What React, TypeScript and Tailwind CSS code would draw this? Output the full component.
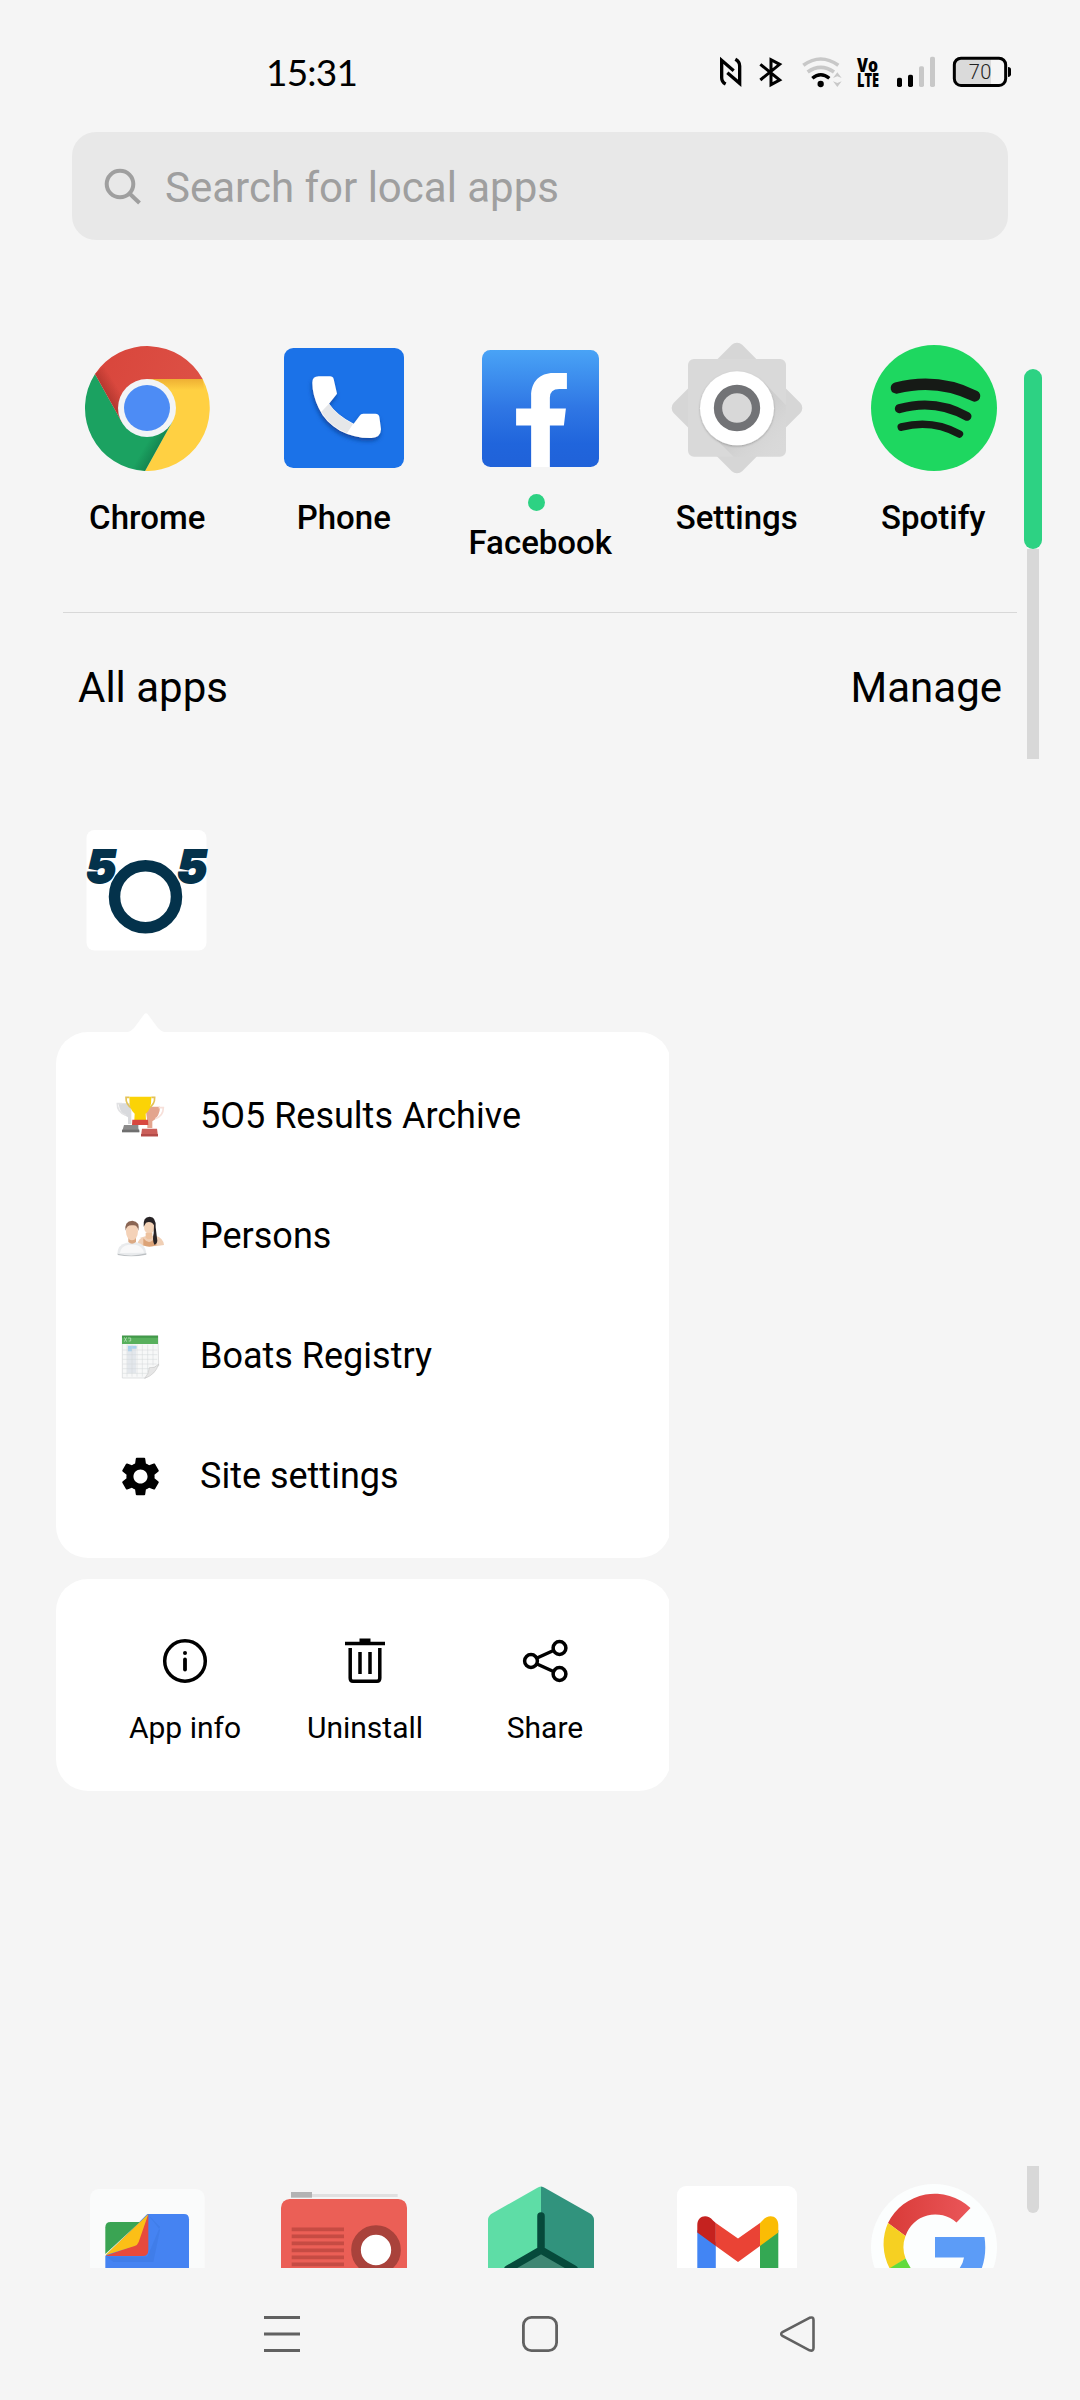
import React from "react";

type Kids = { children: React.ReactNode };

/* ---------- status bar ---------- */

function StatusBar() {
  return (
    <header className="flex h-[132px] shrink-0 items-start pt-[56px]">
      <div className="ml-[266px] h-[32px] w-[424px] font-['Lato'] text-[37px] leading-[32px] tracking-[-0.8px]">15:31</div>
      <svg className="ml-[28px] h-[32px] w-[26px]" viewBox="84 80 78 96" fill="none" stroke="#000" strokeWidth="10">
        <path d="M107 164 Q95 158 95 145 V93 L131 124" />
        <path d="M136 90 Q149 97 149 110 V162 L112 130" />
      </svg>
      <svg className="ml-[14px] h-[32px] w-[26px]" viewBox="202 78 78 96" fill="none" stroke="#000" strokeWidth="9">
        <path d="M209 103 L267 150 L241 164 V89 L267 103 L209 150" />
      </svg>
      <svg className="ml-[17px] h-[32px] w-[42px]" viewBox="331 78 126 96" fill="none">
        <path d="M338 106 Q390 68 443 106" stroke="#c8c8c8" strokeWidth="11" />
        <path d="M351 126 Q390 98 430 126" stroke="#c8c8c8" strokeWidth="11" />
        <path d="M365 145 Q390 123 416 145" stroke="#000" strokeWidth="10" />
        <circle cx="390" cy="162" r="9.500" fill="#000" />
        <path d="M427 144 L440 127 L453 144 L440 139Z M427 154 L440 171 L453 154 L440 159Z" fill="#c8c8c8" />
      </svg>
      <svg className="ml-[12px] h-[34px] w-[26px] overflow-visible" viewBox="0 0 26 34" fontFamily="Open Sans" fontWeight="800">
        <text x="2" y="15.600" fontSize="18.500" textLength="21" lengthAdjust="spacingAndGlyphs">Vo</text>
        <text x="2" y="31" fontSize="19.500" textLength="22" lengthAdjust="spacingAndGlyphs">LTE</text>
      </svg>
      <svg className="ml-[15px] h-[32px] w-[40px]" viewBox="618 78 120 96">
        <rect x="621" y="143" width="15" height="28" rx="5" />
        <rect x="654" y="134" width="15" height="37" rx="5" />
        <rect x="687" y="109" width="15" height="62" rx="5" fill="#c8c8c8" />
        <rect x="720" y="80" width="15" height="91" rx="5" fill="#c8c8c8" />
      </svg>
      <svg className="ml-[16px] h-[32px] w-[60px]" viewBox="786 78 180 96">
        <path d="M812 85 H903 V167 H812 Q793 167 793 148 V104 Q793 85 812 85Z" fill="#dadada" />
        <rect x="793" y="84.500" width="154" height="82" rx="20" fill="none" stroke="#000" strokeWidth="9" />
        <path d="M954 111 Q963 112 963 118 V133 Q963 140 954 141Z" />
        <text x="836" y="147" fontFamily="Roboto" fontSize="60" fontWeight="300" fill="#222" textLength="68">70</text>
      </svg>
    </header>
  );
}

/* ---------- favourites ---------- */

function ChromeIcon() {
  return (
    <svg className="mr-px size-[126px]" viewBox="72 75 378 378">
      <defs>
        <linearGradient id="cr" x1="0" y1="0" x2="1" y2="0.300"><stop offset="0" stopColor="#d8453b" /><stop offset="1" stopColor="#dd5045" /></linearGradient>
        <linearGradient id="crs" gradientUnits="userSpaceOnUse" x1="145" y1="235" x2="180" y2="213"><stop offset="0" stopColor="#7d1f1a" stopOpacity=".4" /><stop offset="1" stopColor="#7d1f1a" stopOpacity="0" /></linearGradient>
        <linearGradient id="cys" gradientUnits="userSpaceOnUse" x1="0" y1="177" x2="0" y2="210"><stop offset="0" stopColor="#e39a2a" stopOpacity=".6" /><stop offset="1" stopColor="#e39a2a" stopOpacity="0" /></linearGradient>
        <linearGradient id="cgs" gradientUnits="userSpaceOnUse" x1="297" y1="380" x2="265" y2="361"><stop offset="0" stopColor="#0a5c38" stopOpacity=".4" /><stop offset="1" stopColor="#0a5c38" stopOpacity="0" /></linearGradient>
      </defs>
      <path d="M428 177 A189 189 0 0 1 255 453 L336 307 L261 264 V177Z" fill="#ffd042" />
      <path d="M428 177 L434 215 H300 L261 177Z" fill="url(#cys)" />
      <path d="M105 162 A189 189 0 0 0 255 453 L336 307 L261 264 L186 307Z" fill="#1ba261" />
      <path d="M255 453 L336 307 L261 264 L200 440Z" fill="url(#cgs)" />
      <path d="M105 162 A189 189 0 0 1 428 177 H261 L186 307Z" fill="url(#cr)" />
      <path d="M105 162 L186 307 L240 200 L140 130Z" fill="url(#crs)" />
      <circle cx="261" cy="264" r="87" fill="#f2f4f6" />
      <circle cx="261" cy="264" r="69" fill="#4d8cf5" />
    </svg>
  );
}

function PhoneIcon() {
  return (
    <svg className="size-[120px]" viewBox="672 84 360 360">
      <defs><filter id="ps" x="-20%" y="-20%" width="150%" height="150%"><feDropShadow dx="-2" dy="9" stdDeviation="6" floodColor="#0b3f91" floodOpacity=".8" /></filter></defs>
      <rect x="672" y="84" width="360" height="360" rx="28" fill="#1b72e8" />
      <g filter="url(#ps)">
        <path d="M757 188 Q757 169 776 169 H810 Q819 169 821 177 L831 221 L807 251 Q830 285 881 311 L899 287 Q902 281 910 281 H946 Q956 281 958 290 L963 328 Q962 353 934 354 Q885 355 840 332 Q795 306 776 264 Q757 224 757 188Z" fill="#fff" />
        <path d="M784 275 L807 251 Q832 287 879 312 L861 340 Q808 318 784 275Z" fill="#e6e7e9" />
      </g>
    </svg>
  );
}

function FacebookIcon() {
  return (
    <svg className="ml-px size-[117px]" viewBox="129 89 350 350">
      <defs><linearGradient id="fb" x1="0" y1="0" x2="0" y2="1"><stop offset="0" stopColor="#49a3f6" /><stop offset=".5" stopColor="#2f76e4" /><stop offset=".8" stopColor="#2065dc" /><stop offset="1" stopColor="#2062d9" /></linearGradient></defs>
      <rect x="129" y="89" width="350" height="350" rx="25" fill="url(#fb)" />
      <path d="M276 439 V315 H231 V264 H276 V226 C276 184 302 158 342 158 H383 V206 H360 Q332 206 332 232 V264 H380 L374 315 H332 V439Z" fill="#fff" />
    </svg>
  );
}

function SettingsIcon() {
  return (
    <svg className="size-[132px]" viewBox="692 65 396 396">
      <defs><filter id="ss" x="-20%" y="-20%" width="140%" height="140%"><feDropShadow dx="0" dy="3" stdDeviation="3" floodOpacity=".25" /></filter>
        <linearGradient id="sg" x1="0" y1="0" x2="1" y2="1"><stop offset=".55" stopColor="#a8a8a8" stopOpacity=".6" /><stop offset=".95" stopColor="#d9d9d9" stopOpacity="0" /></linearGradient></defs>
      <rect x="745" y="118" width="290" height="290" rx="22" fill="#d6d6d6" transform="rotate(45 890 263)" />
      <rect x="743" y="116" width="294" height="293" rx="18" fill="#d9d9d9" />
      <path d="M970 185 L1037 255 V409 H880 L812 342Z" fill="url(#sg)" opacity=".35" />
      <circle cx="890" cy="264" r="111" fill="#fff" filter="url(#ss)" />
      <circle cx="890" cy="263" r="57" fill="#d8d8d8" stroke="#727376" strokeWidth="25" />
    </svg>
  );
}

function SpotifyIcon() {
  return (
    <svg className="ml-px size-[126px]" viewBox="153 75 378 378" fill="none" stroke="#161a16" strokeLinecap="round">
      <circle cx="342" cy="264" r="189" fill="#1ed760" stroke="none" />
      <path d="M229 204 Q352 173 464 228" strokeWidth="34" />
      <path d="M238 266 Q345 235 441 289" strokeWidth="27" />
      <path d="M244 321 Q337 297 418 342" strokeWidth="23" />
    </svg>
  );
}

function AppCell({ label, dot, children }: Kids & { label: string; dot?: boolean }) {
  return (
    <div className="flex w-[196.5px] flex-col items-center">
      <div className="flex h-[132px] items-center justify-center">{children}</div>
      {dot && <div className="mt-[20px] mr-[8px] -mb-[12px] size-[17px] rounded-full bg-[#2dd283]" />}
      <div className="mt-[24px] text-[33px] leading-[40px] font-medium">{label}</div>
    </div>
  );
}

/* ---------- 5O5 tile ---------- */

function FiveOhFive() {
  return (
    <svg className="ml-[86px] mt-[116px] size-[121px] shrink-0 overflow-visible" viewBox="0 0 121 121" fill="#04324b">
      <rect x=".5" y="0" width="120" height="120.500" rx="8" fill="#fff" />
      <circle cx="59.500" cy="66.700" r="31" fill="none" stroke="#04324b" strokeWidth="11.500" />
      <g fontFamily="Inter" fontWeight="900" fontStyle="italic" fontSize="45.500" stroke="#04324b" strokeWidth="1.800">
        <text x="0" y="52.500" textLength="30" lengthAdjust="spacingAndGlyphs">5</text>
        <text x="91" y="52.500" textLength="30" lengthAdjust="spacingAndGlyphs">5</text>
      </g>
    </svg>
  );
}

/* ---------- popup menu ---------- */

function TrophyIcon() {
  return (
    <svg className="h-[44px] w-[50px]" viewBox="45 70 150 132">
      <path d="M56 98 H94 V160 H84 V140 Q58 130 56 98Z" fill="#d9dadd" />
      <path d="M66 99 H52 Q51 124 78 134" fill="none" stroke="#e2e2e4" strokeWidth="5" />
      <path d="M72 163 H115 V172 L118 184 H66Z" fill="#8b8b8b" />
      <path d="M66 177 H118 V185 H66Z" fill="#6f6f6f" />
      <path d="M136 108 H180 Q180 138 157 152 V172 H142 V152Z" fill="#e3a48d" />
      <path d="M176 111 H190 Q190 135 166 144" fill="none" stroke="#f7e0da" strokeWidth="5" />
      <path d="M126 174 H171 L174 197 H123Z" fill="#cb5e59" />
      <path d="M123 190 H174 V197 H123Z" fill="#b34b48" />
      <path d="M88 80 H78 Q77 103 97 114 M154 80 H164 Q165 103 144 114" fill="none" stroke="#e3c258" strokeWidth="5" />
      <path d="M88 78 H154 Q155 116 137 129 L138 148 H103 L104 129 Q87 116 88 78Z" fill="#fbd306" />
      <path d="M97 147 H144 L145 163 H96Z" fill="#d8473f" />
    </svg>
  );
}

function PeopleIcon() {
  return (
    <svg className="h-[44px] w-[50px]" viewBox="45 432 150 132">
      <path d="M112 526 Q114 503 136 499 L166 497 Q190 503 192 525 Q155 532 112 526Z" fill="#f0cfb5" />
      <path d="M130 505 Q148 528 164 503 L170 526 Q146 534 130 526Z" fill="#dca377" />
      <ellipse cx="148" cy="470" rx="16" ry="22" fill="#f3d3b8" />
      <path d="M131 470 Q128 440 149 440 Q169 440 167 472 L172 512 Q171 522 163 524 Q156 510 161 490 L162 466 Q154 452 138 458Z" fill="#292426" />
      <path d="M137 488 H157 V503 Q147 512 137 503Z" fill="#edc29e" />
      <path d="M52 552 Q52 524 80 518 L109 517 Q139 524 139 551 Q96 562 52 552Z" fill="#e9ebed" />
      <path d="M60 549 Q62 528 86 524 H106 Q128 528 132 548Z" fill="#f8f8f9" />
      <path d="M53 551 Q95 562 139 550 V554 Q96 563 53 555Z" fill="#bbbfc2" />
      <path d="M85 500 H108 V516 Q96 526 85 516Z" fill="#dba983" />
      <ellipse cx="96" cy="484" rx="18" ry="27" fill="#f4d2b8" />
      <path d="M77 482 Q72 453 97 452 Q121 454 115 483 Q113 464 98 466 Q80 464 77 482Z" fill="#8a6553" />
    </svg>
  );
}

function SheetIcon() {
  return (
    <svg className="h-[48px] w-[42px]" viewBox="57 784 126 144">
      <path d="M67 795 H174 L176 886 Q160 890 156 893 Q154 915 136 922 H67Z" fill="#f7f8f8" stroke="#d3d5d6" strokeWidth="2" />
      <path d="M82 822 H108 V908 H82Z" fill="#e3e7ec" />
      <path d="M84 826 H110 V834 H96 V842 H84Z" fill="#a9d1ee" />
      <path d="M68 838 H172 M68 852 H172 M68 866 H172 M68 880 H170 M68 894 H150 M68 908 H144 M81 822 V918 M96 822 V918 M111 822 V918 M127 822 V918 M143 822 V905 M159 822 V884" fill="none" stroke="#d3d6d9" strokeWidth="1.500" />
      <path d="M176 880 Q167 912 134 923 Q147 909 148 891 Q165 894 176 880Z" fill="#e6e6e6" stroke="#bdbdbd" strokeWidth="1.500" />
      <path d="M66 795 H174 V820 H66Z" fill="#58b05d" />
      <path d="M66 795 H174 V801 H66Z" fill="#42994a" />
      <path d="M73 800 L80 813 M80 800 L73 813 M84 802 H92 V811 H86" fill="none" stroke="#b5ddb5" strokeWidth="2.500" />
    </svg>
  );
}

function GearIcon() {
  return (
    <svg className="size-[47px]" viewBox="0 0 24 24">
      <path d="M19.140 12.940c.04-.3.060-.61.060-.94 0-.32-.02-.64-.07-.94l2.030-1.580c.18-.14.230-.41.120-.61l-1.920-3.320c-.12-.22-.37-.29-.59-.22l-2.390.96c-.5-.38-1.030-.7-1.620-.94l-.36-2.540c-.04-.24-.24-.41-.48-.41h-3.840c-.24 0-.43.170-.47.410l-.36 2.540c-.59.240-1.130.570-1.620.940l-2.390-.96c-.22-.08-.47 0-.59.220L2.740 8.870c-.12.210-.08.470.12.610l2.030 1.580c-.05.3-.09.630-.09.940s.02.640.07.940l-2.030 1.580c-.18.140-.23.410-.12.610l1.920 3.320c.12.220.37.290.59.220l2.390-.96c.5.380 1.030.7 1.620.940l.36 2.540c.05.240.24.410.48.410h3.840c.24 0 .44-.17.470-.41l.36-2.540c.59-.24 1.130-.56 1.620-.94l2.390.96c.22.080.47 0 .59-.22l1.920-3.320c.12-.22.070-.47-.12-.61l-2.010-1.580zM12 15.600c-1.980 0-3.600-1.620-3.600-3.600s1.620-3.600 3.600-3.600 3.600 1.620 3.600 3.600-1.620 3.600-3.600 3.600z" />
    </svg>
  );
}

function MenuItem({ label, children }: Kids & { label: string }) {
  return (
    <div className="flex h-[120px] items-center">
      <div className="ml-[54px] flex w-[60px] justify-center">{children}</div>
      <div className="ml-[30px] text-[36px] leading-[44px]">{label}</div>
    </div>
  );
}

function Action({ label, children }: Kids & { label: string }) {
  return (
    <div className="flex w-[180px] flex-col items-center">
      <svg className="h-[50px] w-[50px]" viewBox="0 0 50 50" fill="none" stroke="#000" strokeWidth="3.500">{children}</svg>
      <div className="mt-[22px] text-[30px] leading-[40px]">{label}</div>
    </div>
  );
}

function Popup() {
  return (
    <div className="absolute left-[56px] top-[1012px] w-[612.500px] overflow-hidden">
      <svg className="ml-[72px] block h-[20px] w-[36px]" viewBox="0 0 36 20" fill="#fff"><path d="M0 20 Q3 19 6 16 L16 2.500 Q18 0 20 2.500 L30 16 Q33 19 36 20Z" /></svg>
      <div className="h-[526px] w-[615px] rounded-[32px] bg-white pt-[24px]">
        <MenuItem label="5O5 Results Archive"><TrophyIcon /></MenuItem>
        <MenuItem label="Persons"><PeopleIcon /></MenuItem>
        <MenuItem label="Boats Registry"><SheetIcon /></MenuItem>
        <MenuItem label="Site settings"><GearIcon /></MenuItem>
      </div>
      <div className="mt-[21px] flex h-[212px] w-[615px] rounded-[32px] bg-white pl-[39px] pt-[57px]">
        <Action label="App info">
          <circle cx="25" cy="25" r="20.300" />
          <path d="M25 23.500 V33.500" strokeWidth="3.800" strokeLinecap="round" />
          <circle cx="25" cy="17" r="2" fill="#000" stroke="none" />
        </Action>
        <Action label="Uninstall">
          <path d="M5 7.500 H45" />
          <path d="M19.500 4.500 H30.500" strokeWidth="4" />
          <path d="M10.200 12 V42 Q10.200 45.300 13 45.300 H37 Q39.800 45.300 39.800 42 V12 M20 16 V38 M30 16 V38" />
        </Action>
        <Action label="Share">
          <circle cx="11" cy="25" r="6.400" /><circle cx="39.500" cy="12" r="6.400" /><circle cx="39.500" cy="38" r="6.400" />
          <path d="M17 22 L33.500 14.500 M17 28 L33.500 35.500" />
        </Action>
      </div>
    </div>
  );
}

/* ---------- partially visible bottom row ---------- */

function Cell({ children }: Kids) {
  return <div className="flex w-[196.5px] justify-center">{children}</div>;
}

function BottomRow() {
  return (
    <div className="ml-[49px] flex h-[84px] w-[983px] shrink-0 overflow-hidden">
      <Cell>
        <svg className="h-[84px] w-[126px]" viewBox="72 102 378 252">
          <rect x="90" y="117" width="344" height="344" rx="26" fill="#fafbfb" />
          <path d="M136 318 L262 192 H372 Q387 192 387 208 V360 H136Z" fill="#4583f2" />
          <path d="M264 194 L300 230 L262 320 H140 L160 336 H280 L300 240Z" fill="#356fd3" opacity=".3" />
          <path d="M136 312 V232 Q136 216 152 216 H240Z" fill="#3aa453" />
          <path d="M136 318 L230 284 L265 192 V300 Q265 318 248 318Z" fill="#e74a3c" />
          <path d="M136 316 L265 192 L236 276 Q233 285 224 288Z" fill="#fcbf16" />
        </svg>
      </Cell>
      <Cell>
        <svg className="h-[84px] w-[126px]" viewBox="663 102 378 252">
          <path d="M740 132 H1013 V141 H740Z" fill="#e0e0e0" />
          <path d="M693 126 H756 V143 H693Z" fill="#b3b3b3" />
          <rect x="663" y="147" width="378" height="300" rx="26" fill="#eb5f56" />
          <path d="M695 238 H852 M695 259 H852 M695 280 H852 M695 301 H852 M695 322 H852 M695 343 H852" stroke="#c64b43" strokeWidth="11" />
          <circle cx="948" cy="300" r="60" fill="#fff" stroke="#a9423b" strokeWidth="29" />
        </svg>
      </Cell>
      <Cell>
        <svg className="ml-px h-[84px] w-[126px]" viewBox="478 2184 126 84">
          <path d="M541 2186.500 V2250 L488 2280 V2220 Q488 2216 492 2213.500 L537 2188 Q539 2186.500 541 2186.500Z" fill="#5edda6" />
          <path d="M541 2186.500 Q543 2186.500 545 2188 L590 2213.500 Q594 2216 594 2220 V2280 L541 2250Z" fill="#31937d" />
          <path d="M541 2250 L500 2274 H582Z" fill="#3f8773" />
          <path d="M541 2216 V2250 L508 2269 M541 2250 L574 2269" fill="none" stroke="#064a3b" strokeWidth="7.500" strokeLinecap="round" />
        </svg>
      </Cell>
      <Cell>
        <svg className="h-[84px] w-[126px]" viewBox="674 2184 126 84">
          <rect x="677" y="2186" width="120" height="120" rx="9" fill="#fff" />
          <path d="M697.300 2230 L715.800 2242 V2270 H697.300Z" fill="#4285f4" />
          <path d="M778.300 2230 L760 2242 V2270 H778.300Z" fill="#34a853" />
          <path d="M715.800 2223 L738 2238.500 L760 2223 V2246 L738 2262 L715.800 2246Z" fill="#ea4335" />
          <path d="M697.300 2225 C697.300 2216 707 2213 713 2220.500 L715.800 2223 V2246 L697.300 2232.500Z" fill="#c5221f" />
          <path d="M778.300 2225 C778.300 2216 769 2213 762.500 2220.500 L760 2223 V2246 L778.300 2232.500Z" fill="#fbbc04" />
        </svg>
      </Cell>
      <Cell>
        <svg className="ml-px h-[84px] w-[126px]" viewBox="871 2184 126 84">
          <defs><linearGradient id="gr" x1="0" x2="1"><stop offset="0" stopColor="#d93b38" /><stop offset="1" stopColor="#ea5659" /></linearGradient></defs>
          <circle cx="934" cy="2247" r="63" fill="#fcfefe" />
          <path d="M888 2223 A52 52 0 0 1 970.500 2208 L956.500 2222.500 A31.500 31.500 0 0 0 905.500 2236Z" fill="url(#gr)" />
          <path d="M888 2223 A52 52 0 0 0 890 2269 L905.600 2258.500 A31.500 31.500 0 0 1 905.500 2236Z" fill="#f6d022" />
          <path d="M890 2268 L905.600 2258.500 Q908 2264 912 2270 H891Z" fill="#62db3d" />
          <path d="M935 2237 H984.500 Q987 2254 981.500 2269 H959 Q963 2264 964 2257.500 H935Z" fill="#5c9cf7" />
        </svg>
      </Cell>
    </div>
  );
}

function NavBar() {
  return (
    <nav className="flex h-[132px] shrink-0 items-center text-[#616161]">
      <svg className="ml-[262px] size-[40px]" viewBox="0 0 40 40" stroke="currentColor" strokeWidth="3"><path d="M2 3.500 H38 M2 20 H38 M2 36.500 H38" /></svg>
      <svg className="ml-[218px] size-[40px]" viewBox="0 0 40 40" fill="none" stroke="currentColor" strokeWidth="2.800"><rect x="3.400" y="3.400" width="33.200" height="33.200" rx="8" /></svg>
      <svg className="ml-[218px] size-[40px]" viewBox="0 0 40 40" fill="none" stroke="currentColor" strokeWidth="2.600"><path d="M31.500 3.800 L4.500 18 Q1.800 20 4.500 22 L31.500 36.300 Q35.500 37.500 35.500 34 V6 Q35.500 2.500 31.500 3.800Z" /></svg>
    </nav>
  );
}

export default function App() {
  return (
    <div className="relative flex h-[2400px] w-[1080px] flex-col overflow-hidden bg-[#f5f5f5] font-['Roboto',sans-serif] text-black">
      <StatusBar />
      <div className="mr-[72px] ml-[72px] flex h-[108px] shrink-0 items-center rounded-[24px] bg-[#e8e8e8] text-[#9f9f9f]">
        <svg className="mt-px ml-[32px] size-[38px]" viewBox="0 0 38 38" fill="none" stroke="currentColor" strokeWidth="4"><circle cx="16" cy="16" r="13.300" /><path d="M25.500 25.500 L35.500 35" /></svg>
        <div className="mt-[3px] ml-[23px] text-[42px] leading-[50px]">Search for local apps</div>
      </div>
      <section className="mt-[102px] ml-[49px] flex h-[270px] w-[983px] shrink-0">
        <AppCell label="Chrome"><ChromeIcon /></AppCell>
        <AppCell label="Phone"><PhoneIcon /></AppCell>
        <AppCell label="Facebook" dot><FacebookIcon /></AppCell>
        <AppCell label="Settings"><SettingsIcon /></AppCell>
        <AppCell label="Spotify"><SpotifyIcon /></AppCell>
      </section>
      <div className="mr-[63px] ml-[63px] h-px shrink-0 bg-[#d8d8d8]" />
      <div className="mr-[78px] ml-[78px] mt-[50px] flex h-[51px] shrink-0 justify-between text-[42px] leading-[50px]">
        <span>All apps</span>
        <span>Manage</span>
      </div>
      <FiveOhFive />
      <div className="flex-1" />
      <BottomRow />
      <NavBar />

      <div className="absolute top-[369px] left-[1024px] flex flex-col items-center">
        <div className="h-[180px] w-[18px] rounded-full bg-[#2dd283]" />
        <div className="h-[210px] w-[12px] bg-[#d8d8d8]" />
      </div>
      <div className="absolute top-[2166px] left-[1027px] h-[47px] w-[12px] rounded-b-full bg-[#d8d8d8]" />
      <Popup />
    </div>
  );
}
